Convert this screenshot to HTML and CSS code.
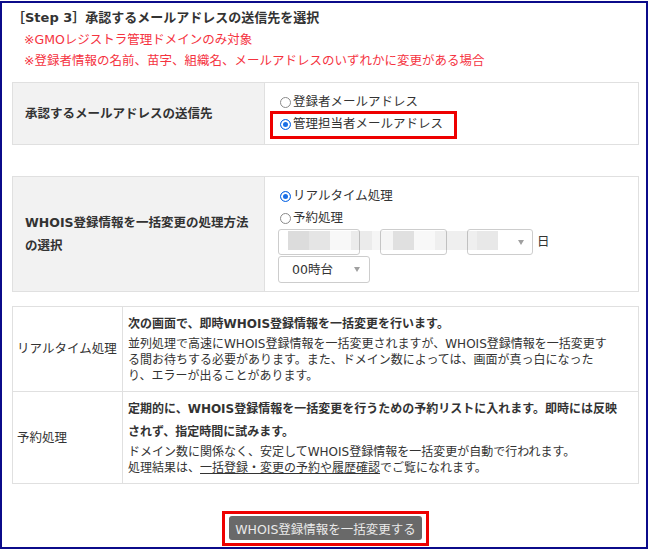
FILE: index.html
```html
<!DOCTYPE html>
<html lang="ja">
<head>
<meta charset="utf-8">
<title>Step 3</title>
<link rel="stylesheet" href="styles.css">
</head>
<body>
<div class="frame">
  <h2 class="step-title">［Step 3］承認するメールアドレスの送信先を選択</h2>
  <p class="note">※GMOレジストラ管理ドメインのみ対象</p>
  <p class="note">※登録者情報の名前、苗字、組織名、メールアドレスのいずれかに変更がある場合</p>

  <div class="form-table t-mail">
    <div class="th">承認するメールアドレスの送信先</div>
    <div class="td">
      <label class="radio-line"><span class="radio"></span>登録者メールアドレス</label>
      <label class="radio-line marked"><span class="radio checked"></span>管理担当者メールアドレス</label>
    </div>
  </div>

  <div class="form-table t-method">
    <div class="th">WHOIS登録情報を一括変更の処理方法<br>の選択</div>
    <div class="td">
      <label class="radio-line"><span class="radio checked"></span>リアルタイム処理</label>
      <label class="radio-line"><span class="radio"></span>予約処理</label>
      <div class="date-row">
        <div class="sel sel-year"></div>
        <div class="sel sel-month"></div>
        <div class="sel sel-day"><span class="arrow"></span></div>
        <span class="unit">日</span>
        <div class="mosaic"></div>
      </div>
      <div class="sel sel-hour"><span class="sel-text">00時台</span><span class="arrow"></span></div>
    </div>
  </div>

  <div class="info-table">
    <div class="info-th">リアルタイム処理</div>
    <div class="info-td">
      <p class="lead">次の画面で、即時WHOIS登録情報を一括変更を行います。</p>
      <p class="desc">並列処理で高速にWHOIS登録情報を一括変更されますが、WHOIS登録情報を一括変更す<br>る間お待ちする必要があります。また、ドメイン数によっては、画面が真っ白になった<br>り、エラーが出ることがあります。</p>
    </div>
    <div class="info-th last">予約処理</div>
    <div class="info-td last">
      <p class="lead">定期的に、WHOIS登録情報を一括変更を行うための予約リストに入れます。即時には反映<br>されず、指定時間に試みます。</p>
      <p class="desc">ドメイン数に関係なく、安定してWHOIS登録情報を一括変更が自動で行われます。<br>処理結果は、<a class="link" href="#">一括登録・変更の予約や履歴確認</a>でご覧になれます。</p>
    </div>
  </div>

  <div class="actions">
    <span class="mark-box"><button class="submit" type="button">WHOIS登録情報を一括変更する</button></span>
  </div>
</div>
</body>
</html>
```

FILE: styles.css
```css
html, body {
  margin: 0;
  padding: 0;
  background: #fff;
}

body {
  font-family: "DejaVu Sans", "Noto Sans CJK JP", sans-serif;
  font-size: 12.5px;
  color: #333;
}

.frame {
  box-sizing: border-box;
  width: 648px;
  height: 548px;
  margin-top: 1px;
  border: 2px solid #0b0b8a;
  padding: 4px 7px 0 10px;
}

.step-title {
  margin: 0;
  font-size: 13px;
  font-weight: bold;
  line-height: 22px;
}

.note {
  margin: 0;
  padding-left: 12px;
  color: #f5333f;
  line-height: 21px;
}

.form-table {
  display: grid;
  grid-template-columns: 252px 1fr;
  border: 1px solid #e0e0e0;
  margin-top: 11px;
}

.t-method {
  margin-top: 31px;
}

.th {
  background: #f2f2f2;
  border-right: 1px solid #e0e0e0;
  font-weight: bold;
  display: flex;
  align-items: center;
  padding-left: 12px;
  line-height: 23px;
}

.td {
  padding: 8px 0 9px 13px;
  line-height: 22px;
}

.t-method .td {
  padding-bottom: 8px;
}

.radio-line {
  display: flex;
  align-items: center;
  margin-left: 2px;
  height: 22px;
  position: relative;
  width: max-content;
}

.radio {
  box-sizing: border-box;
  width: 11px;
  height: 11px;
  border: 1px solid #8a8a8a;
  border-radius: 50%;
  background: #fff;
  margin-right: 2px;
}

.radio.checked {
  border: 1.5px solid #1a6fe6;
  background: #1a6fe6;
  box-shadow: inset 0 0 0 2px #fff;
}

.marked::after {
  content: "";
  position: absolute;
  left: -10px;
  top: -2px;
  width: 187px;
  bottom: -4px;
  box-sizing: border-box;
  border: 3px solid #ee0000;
}

.date-row {
  position: relative;
  display: flex;
  align-items: center;
  height: 26px;
}

.sel {
  box-sizing: border-box;
  height: 26px;
  border: 1px solid #cdcdcd;
  border-radius: 3px;
  background: #fff;
  display: flex;
  align-items: center;
}

.sel-year {
  width: 82px;
}

.sel-month {
  width: 67px;
  margin-left: 20px;
}

.sel-day {
  width: 66px;
  margin-left: 20px;
}

.unit {
  margin-left: 4px;
}

.sel-hour {
  width: 92px;
  margin-top: 1px;
  height: 27px;
}

.sel-text {
  padding-left: 13px;
}

.arrow {
  margin-left: auto;
  margin-right: 8px;
  width: 0;
  height: 0;
  border-left: 3.5px solid transparent;
  border-right: 3.5px solid transparent;
  border-top: 5px solid #a0a0a0;
}

.sel-hour .arrow {
  margin-right: 9px;
}

.mosaic {
  position: absolute;
  left: 10px;
  top: 2px;
  width: 210px;
  height: 19px;
  background: linear-gradient(to right,
    rgba(0, 0, 0, 0.137) 0 21px,
    rgba(0, 0, 0, 0.1) 21px 42px,
    rgba(0, 0, 0, 0.027) 42px 63px,
    rgba(0, 0, 0, 0.078) 63px 84px,
    rgba(0, 0, 0, 0.04) 84px 105px,
    rgba(0, 0, 0, 0.122) 105px 126px,
    rgba(0, 0, 0, 0.027) 126px 147px,
    rgba(0, 0, 0, 0.063) 147px 168px,
    rgba(0, 0, 0, 0.063) 168px 189px,
    rgba(0, 0, 0, 0.09) 189px 210px);
}

.info-table {
  display: grid;
  grid-template-columns: 110px 1fr;
  border: 1px solid #e0e0e0;
  margin-top: 14px;
}

.info-th {
  border-right: 1px solid #e0e0e0;
  border-bottom: 1px solid #e0e0e0;
  display: flex;
  align-items: center;
  padding-left: 4px;
  line-height: 16px;
}

.info-td {
  border-bottom: 1px solid #e0e0e0;
  padding: 6px 4px 7px 5px;
  font-size: 12px;
}

.info-th.last,
.info-td.last {
  border-bottom: none;
}

.lead {
  margin: 0;
  font-weight: bold;
  line-height: 23px;
  white-space: nowrap;
}

.desc {
  margin: 0;
  line-height: 16px;
  white-space: nowrap;
}

.link {
  color: #333;
  text-decoration: underline;
}

.actions {
  margin-top: 27px;
  text-align: center;
}

.mark-box {
  display: inline-flex;
  border: 3px solid #ee0000;
  padding: 2px 4px 3px;
}

.submit {
  height: 24px;
  padding: 0 6px;
  border: none;
  border-radius: 3px;
  background: #696969;
  color: #eaeaea;
  font-family: inherit;
  font-size: 12.5px;
}
```
